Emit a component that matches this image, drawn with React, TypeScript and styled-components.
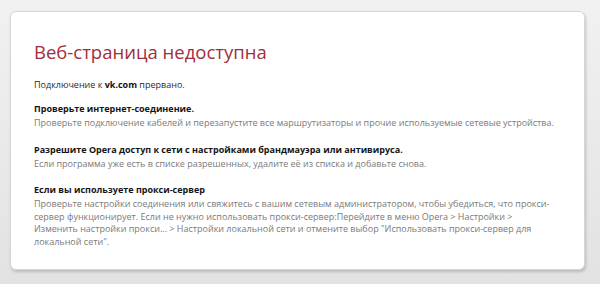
import styled, { createGlobalStyle } from "styled-components";

const GlobalStyle = createGlobalStyle`
  html, body {
    margin: 0;
    padding: 0;
    height: 100%;
  }
  body {
    background: linear-gradient(#f1f1f1, #e2e2e2);
    font-family: "Open Sans", "Noto Sans", "Liberation Sans", sans-serif;
  }
`;

const sections = [
  {
    title: "Проверьте интернет-соединение.",
    text: "Проверьте подключение кабелей и перезапустите все маршрутизаторы и прочие используемые сетевые устройства.",
  },
  {
    title: "Разрешите Opera доступ к сети с настройками брандмауэра или антивируса.",
    text: "Если программа уже есть в списке разрешенных, удалите её из списка и добавьте снова.",
  },
  {
    title: "Если вы используете прокси-сервер",
    text: "Проверьте настройки соединения или свяжитесь с вашим сетевым администратором, чтобы убедиться, что прокси-сервер функционирует. Если не нужно использовать прокси-сервер:Перейдите в меню Opera > Настройки > Изменить настройки прокси... > Настройки локальной сети и отмените выбор \"Использовать прокси-сервер для локальной сети\".",
  },
];

const App = () => {
  return (
    <Page>
      <GlobalStyle />
      <Card>
        <Title>Веб-страница недоступна</Title>
        <Lead>
          Подключение к <b>vk.com</b> прервано.
        </Lead>
        {sections.map((s, i) => (
          <Section key={i}>
            <Heading>{s.title}</Heading>
            <Hint>{s.text}</Hint>
          </Section>
        ))}
      </Card>
    </Page>
  );
};

const Page = styled.div`
  box-sizing: border-box;
  width: 600px;
  height: 284px;
  padding: 11px 15px 14px 10px;
  display: flex;
`;

const Card = styled.div`
  flex: 1;
  display: flex;
  flex-direction: column;
  background: #ffffff;
  border: 1px solid #d6d6d6;
  border-radius: 6px;
  box-shadow: 1px 2px 3px rgba(0, 0, 0, 0.18);
  padding: 26px 24px 0 23px;
`;

const Title = styled.h1`
  margin: 0 0 13px;
  font-size: 18.5px;
  font-weight: 400;
  line-height: 27px;
  color: #a02f3a;
`;

const Lead = styled.div`
  font-size: 9px;
  line-height: 13px;
  color: #2a2a2a;
  margin-bottom: 11px;
  b {
    font-weight: 700;
    color: #111;
  }
`;

const Section = styled.div`
  display: flex;
  flex-direction: column;
  margin-bottom: 13px;
`;

const Heading = styled.div`
  font-size: 9px;
  font-weight: 700;
  line-height: 13px;
  color: #151515;
  margin-bottom: 2px;
`;

const Hint = styled.div`
  font-size: 9px;
  line-height: 12.5px;
  color: #7a7a7a;
  max-width: 524px;
`;

export default App;
